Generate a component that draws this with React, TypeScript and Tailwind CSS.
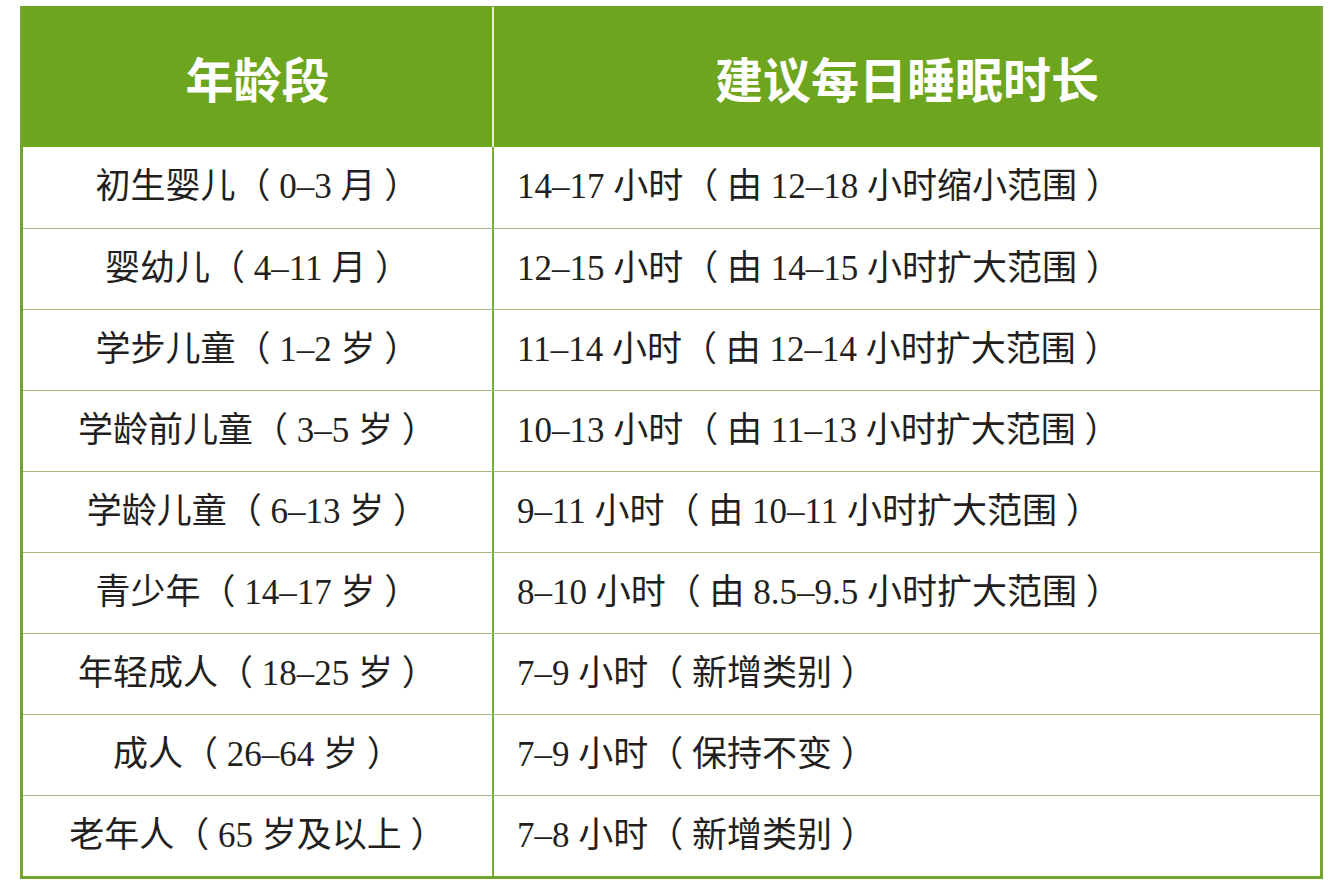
const rows: [string, string][] = [
  ['初生婴儿（ 0–3 月 ）', '14–17 小时（ 由 12–18 小时缩小范围 ）'],
  ['婴幼儿（ 4–11 月 ）', '12–15 小时（ 由 14–15 小时扩大范围 ）'],
  ['学步儿童（ 1–2 岁 ）', '11–14 小时（ 由 12–14 小时扩大范围 ）'],
  ['学龄前儿童（ 3–5 岁 ）', '10–13 小时（ 由 11–13 小时扩大范围 ）'],
  ['学龄儿童（ 6–13 岁 ）', '9–11 小时（ 由 10–11 小时扩大范围 ）'],
  ['青少年（ 14–17 岁 ）', '8–10 小时（ 由 8.5–9.5 小时扩大范围 ）'],
  ['年轻成人（ 18–25 岁 ）', '7–9 小时（ 新增类别 ）'],
  ['成人（ 26–64 岁 ）', '7–9 小时（ 保持不变 ）'],
  ['老年人（ 65 岁及以上 ）', '7–8 小时（ 新增类别 ）']
]

export default function App() {
  return (
    <div className="w-[1334px] h-[892px] bg-white pl-[20px] pt-[6px]">
      <div className="w-[1303px] border-x-[3px] border-b-[3px] border-t border-[#74a22e]">
        {/* 表头 */}
        <div className="flex h-[140px] bg-[#6ea51f] font-['Noto_Sans_CJK_SC',sans-serif] text-[48px] font-bold text-white">
          <div className="w-[469px] flex items-center justify-center">年龄段</div>
          <div className="w-[2px] bg-[#e4eed2]" />
          <div className="flex-1 flex items-center justify-center">建议每日睡眠时长</div>
        </div>

        {/* 数据行 */}
        {rows.map(([age, hours], i) => (
          <div
            key={age}
            className={
              i === 0
                ? "flex h-[81px] font-['Liberation_Serif','Noto_Sans_CJK_SC',serif] text-[35px] text-[#231f20]"
                : "flex h-[81px] border-t border-[#a3b878] font-['Liberation_Serif','Noto_Sans_CJK_SC',serif] text-[35px] text-[#231f20]"
            }
          >
            <div className="w-[469px] flex items-center justify-center whitespace-pre">{age}</div>
            <div className="w-[2px] bg-[#7aab36]" />
            <div className="flex-1 flex items-center pl-[23px] whitespace-pre">{hours}</div>
          </div>
        ))}
      </div>
    </div>
  )
}
